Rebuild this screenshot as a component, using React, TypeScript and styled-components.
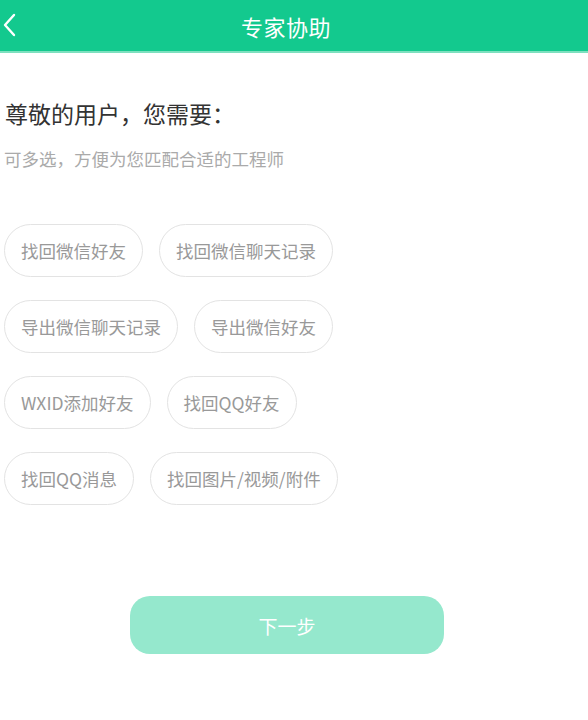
import React from "react";
import styled, { createGlobalStyle } from "styled-components";

const GlobalStyle = createGlobalStyle`
  html, body {
    margin: 0;
    padding: 0;
    background: #fff;
    font-family: "Noto Sans CJK SC", "Noto Sans", sans-serif;
  }
`;

const options = [
  ["找回微信好友", "找回微信聊天记录"],
  ["导出微信聊天记录", "导出微信好友"],
  ["WXID添加好友", "找回QQ好友"],
  ["找回QQ消息", "找回图片/视频/附件"],
];

export default function App() {
  return (
    <Page>
      <GlobalStyle />
      <Header>
        <Back aria-label="back">
          <svg width="14" height="24" viewBox="0 0 14 24">
            <path
              d="M12 2 L3 12 L12 22"
              fill="none"
              stroke="#fff"
              strokeWidth="2.4"
              strokeLinecap="round"
              strokeLinejoin="round"
            />
          </svg>
        </Back>
        <HeaderTitle>专家协助</HeaderTitle>
      </Header>
      <Content>
        <Heading>尊敬的用户，您需要：</Heading>
        <Hint>可多选，方便为您匹配合适的工程师</Hint>
        <Options>
          {options.map((row, i) => (
            <Row key={i}>
              {row.map((label) => (
                <Chip key={label}>{label}</Chip>
              ))}
            </Row>
          ))}
        </Options>
        <NextButton>下一步</NextButton>
      </Content>
    </Page>
  );
}

const Page = styled.div`
  width: 588px;
  min-height: 720px;
  background: #fff;
`;

const Header = styled.header`
  position: relative;
  height: 51px;
  background: #13c98e;
  border-bottom: 2px solid #7ee0bf;
  display: flex;
  align-items: center;
  justify-content: center;
`;

const Back = styled.div`
  position: absolute;
  left: 2px;
  top: 13px;
  display: flex;
`;

const HeaderTitle = styled.h1`
  margin: 0 0 0 -16px;
  color: #fff;
  font-size: 22px;
  font-weight: 400;
  letter-spacing: 0.5px;
`;

const Content = styled.main`
  padding: 0 4px;
  display: flex;
  flex-direction: column;
`;

const Heading = styled.h2`
  margin: 44px 0 0 1px;
  font-size: 23px;
  font-weight: 400;
  color: #333;
  line-height: 32px;
`;

const Hint = styled.p`
  margin: 18px 0 0 0;
  font-size: 17.5px;
  color: #aaa;
  line-height: 24px;
`;

const Options = styled.div`
  margin-top: 53px;
  display: flex;
  flex-direction: column;
  gap: 23px;
`;

const Row = styled.div`
  display: flex;
  gap: 16px;
`;

const Chip = styled.button`
  height: 53px;
  padding: 0 16px;
  border: 1px solid #e3e3e3;
  border-radius: 27px;
  background: #fff;
  color: #999;
  font-family: inherit;
  font-size: 17.5px;
  cursor: pointer;
`;

const NextButton = styled.button`
  align-self: flex-start;
  margin: 91px 0 0 126px;
  width: 314px;
  height: 58px;
  border: none;
  border-radius: 20px;
  background: #95e8cd;
  color: #fff;
  font-family: inherit;
  font-size: 19px;
`;
